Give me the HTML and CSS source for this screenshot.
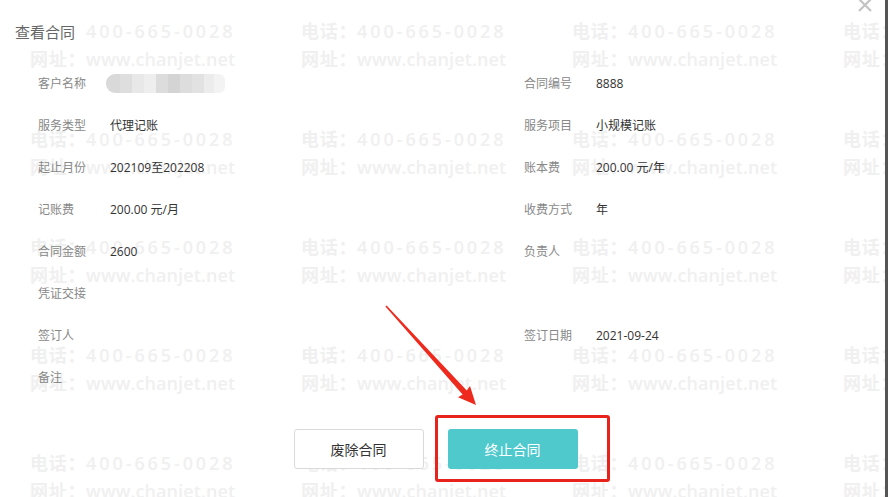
FILE: index.html
```html
<!DOCTYPE html>
<html lang="zh-CN">
<head>
    <meta charset="UTF-8">
    <meta name="viewport" content="width=device-width, initial-scale=1.0">
    <title>查看合同</title>
    <link rel="stylesheet" href="styles.css">
</head>
<body>
    <div class="dialog">
        <!-- watermark tiles, filled in by the script below -->
        <div class="watermark" id="watermark"></div>

        <button class="close-btn" aria-label="关闭">
            <svg width="14" height="14" viewBox="0 0 14 14"><path d="M1 1 L13 13 M13 1 L1 13" stroke="#c4c4c4" stroke-width="2.2" fill="none"/></svg>
        </button>

        <div class="dialog-header">
            <span class="dialog-title">查看合同</span>
        </div>

        <div class="contract-form">
            <div class="field"><span class="label">客户名称</span><span class="value"><span class="masked"></span></span></div>
            <div class="field"><span class="label">合同编号</span><span class="value">8888</span></div>

            <div class="field"><span class="label">服务类型</span><span class="value">代理记账</span></div>
            <div class="field"><span class="label">服务项目</span><span class="value">小规模记账</span></div>

            <div class="field"><span class="label">起止月份</span><span class="value">202109至202208</span></div>
            <div class="field"><span class="label">账本费</span><span class="value">200.00 元/年</span></div>

            <div class="field"><span class="label">记账费</span><span class="value">200.00 元/月</span></div>
            <div class="field"><span class="label">收费方式</span><span class="value">年</span></div>

            <div class="field"><span class="label">合同金额</span><span class="value">2600</span></div>
            <div class="field"><span class="label">负责人</span><span class="value"></span></div>

            <div class="field"><span class="label">凭证交接</span><span class="value"></span></div>
            <div class="field"></div>

            <div class="field"><span class="label">签订人</span><span class="value"></span></div>
            <div class="field"><span class="label">签订日期</span><span class="value">2021-09-24</span></div>

            <div class="field"><span class="label">备注</span><span class="value"></span></div>
            <div class="field"></div>
        </div>

        <div class="dialog-footer">
            <button class="btn btn-default">废除合同</button>
            <button class="btn btn-primary">终止合同</button>
        </div>

        <!-- screenshot annotation -->
        <div class="mark-box"></div>
        <svg class="mark-arrow" width="888" height="497" viewBox="0 0 888 497">
            <polygon fill="#ee2a1f" points="386.6,305.4 466.8,390.4 470,386 476,405 458,397.3 462.6,394.4 385.4,306.6"/>
        </svg>
    </div>

    <script>
        // Repeat the watermark tile across the dialog
        const wm = document.getElementById('watermark');
        for (let i = 0; i < 20; i++) {
            const tile = document.createElement('div');
            tile.className = 'wm-tile';
            tile.innerHTML =
                '<span class="wm-phone"><span class="wm-key">电话：</span>400-665-0028</span>' +
                '<span class="wm-url"><span class="wm-key">网址：</span>www.chanjet.net</span>';
            wm.appendChild(tile);
        }
    </script>
</body>
</html>
```

FILE: styles.css
```css
/* Page */
body {
    margin: 0;
    background: #555;
    font-family: "Open Sans", "Noto Sans CJK SC", sans-serif;
}

/* Dialog */
.dialog {
    position: relative;
    width: 885px;
    height: 497px;
    background: #fff;
    overflow: hidden;
}

/* Watermark */
.watermark {
    position: absolute;
    top: 17px;
    left: 30px;
    display: grid;
    grid-template-columns: repeat(4, 205px);
    column-gap: 66px;
    row-gap: 52px;
    pointer-events: none;
}

.wm-tile {
    display: flex;
    flex-direction: column;
    white-space: nowrap;
    font-size: 18px;
    font-weight: 600;
    line-height: 28px;
    color: #f0f0f0;
}

.wm-phone {
    letter-spacing: 2.9px;
}

.wm-url {
    letter-spacing: 0.1px;
}

.wm-key {
    letter-spacing: 0.7px;
}

/* Close button */
.close-btn {
    position: absolute;
    top: -2px;
    right: 13px;
    padding: 0;
    border: none;
    background: none;
    line-height: 0;
}

/* Header */
.dialog-header {
    position: relative;
    height: 62px;
    display: flex;
    align-items: center;
    padding-left: 15px;
}

.dialog-title {
    background: #fff;
    padding-right: 8px;
    font-size: 15px;
    color: #666;
}

/* Form */
.contract-form {
    position: relative;
    display: grid;
    grid-template-columns: 486px 1fr;
    grid-auto-rows: 42px;
    padding-left: 38px;
}

.field {
    display: flex;
    align-items: center;
    font-size: 12px;
}

.label {
    width: 72px;
    color: #888;
}

.value {
    color: #333;
}

.masked {
    display: block;
    width: 119px;
    height: 19px;
    margin-left: -4px;
    border-radius: 9px 6px 6px 9px;
    background: linear-gradient(90deg,
        #d9d9d9 0, #d9d9d9 14px,
        #dedede 14px, #dedede 26px,
        #e8e8e8 26px, #e8e8e8 38px,
        #eeeeee 38px, #eeeeee 50px,
        #dcdcdc 50px, #dcdcdc 62px,
        #d4d4d4 62px, #d4d4d4 74px,
        #dddddd 74px, #dddddd 86px,
        #e2e2e2 86px, #e2e2e2 98px,
        #ececec 98px, #ececec 108px,
        #f3f3f3 108px);
}

/* Footer buttons */
.dialog-footer {
    position: relative;
    display: flex;
    justify-content: center;
    gap: 24px;
    margin-top: 31px;
    padding-right: 14px;
}

.btn {
    width: 130px;
    height: 40px;
    border-radius: 3px;
    font-family: inherit;
    font-size: 14px;
}

.btn-default {
    border: 1px solid #d9d9d9;
    background: #fff;
    color: #333;
}

.btn-primary {
    border: none;
    background: #4fc9cc;
    color: #fff;
}

/* Annotation */
.mark-box {
    position: absolute;
    left: 435px;
    top: 415px;
    width: 169px;
    height: 61px;
    border: 3px solid #e8231b;
    border-radius: 3px;
}

.mark-arrow {
    position: absolute;
    top: 0;
    left: 0;
    pointer-events: none;
}
```
